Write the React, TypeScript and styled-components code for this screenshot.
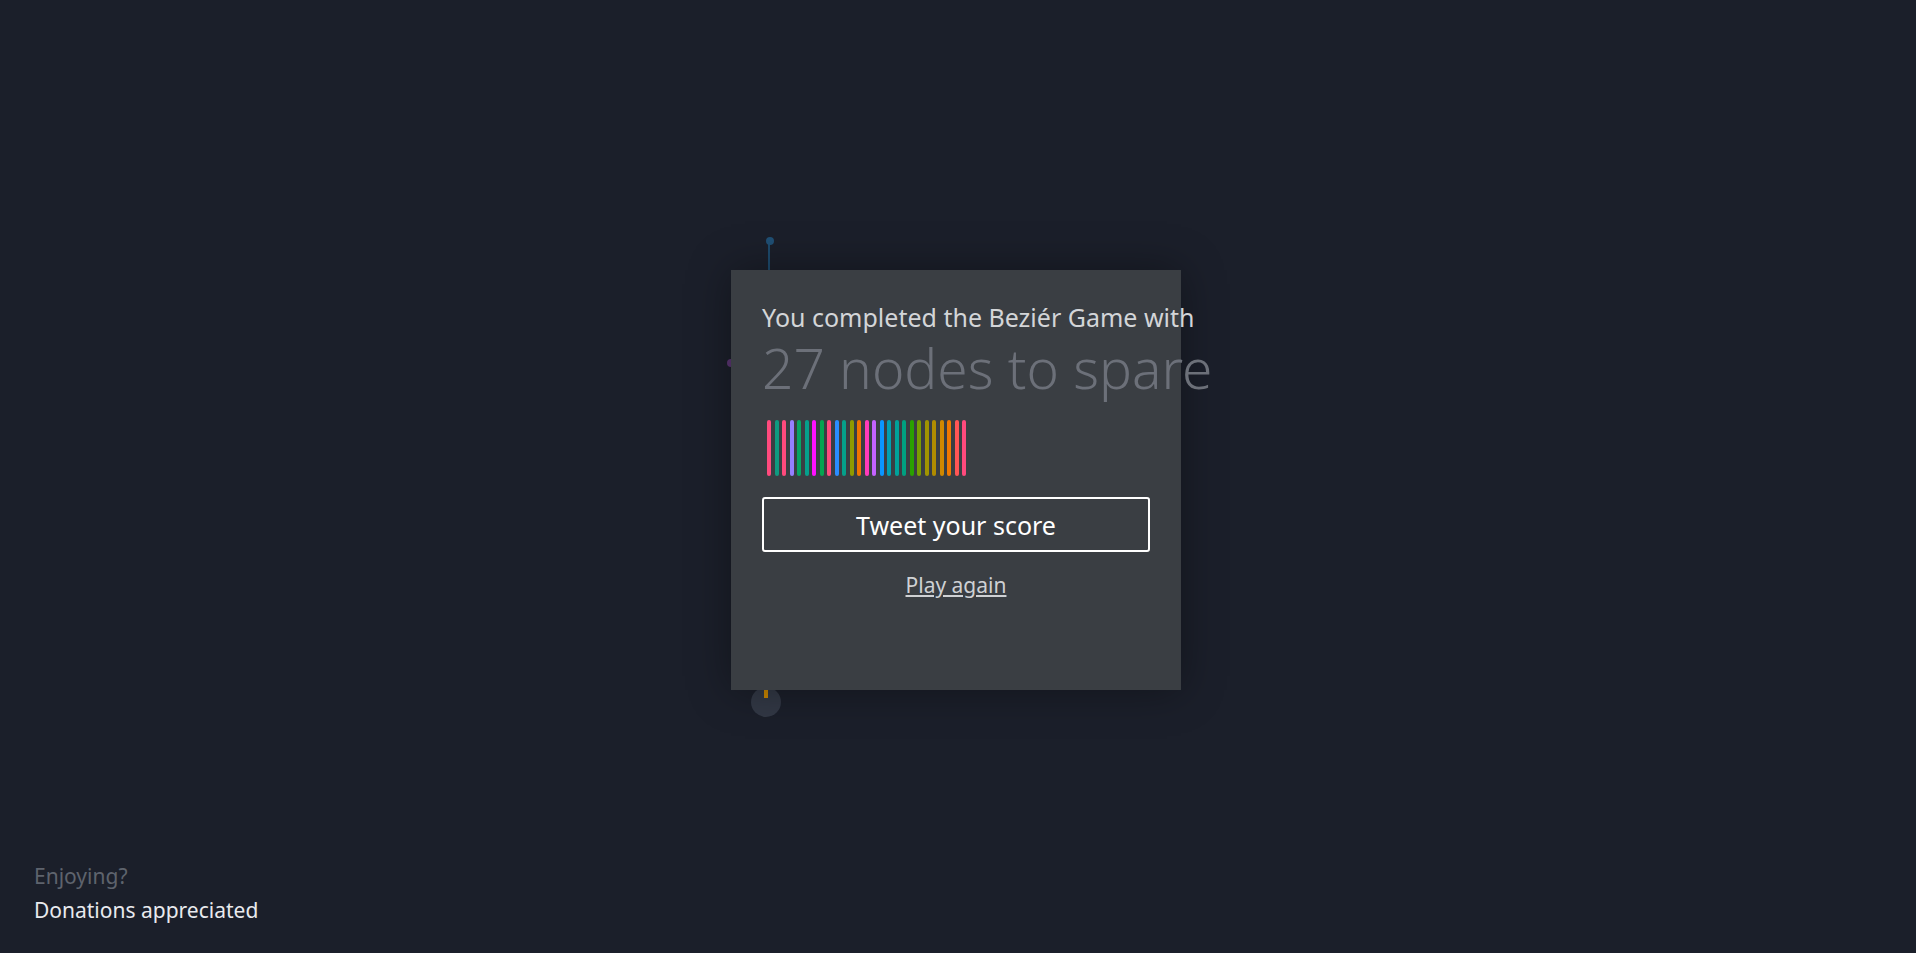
import styled, { createGlobalStyle } from "styled-components";

const GlobalStyle = createGlobalStyle`
  html, body {
    margin: 0;
    padding: 0;
    background: #1b1f2a;
    font-family: "Noto Sans", "Open Sans", sans-serif;
  }
`;

const bars = [
  "#ff4a7d", "#0f9a80", "#ff4a7d", "#9580ff", "#07a464", "#05a08c", "#ff10ff",
  "#05a450", "#ff4a7d", "#2a8cff", "#05a08a", "#8f9a00", "#f07300", "#ff3aba",
  "#c462ff", "#0a96ff", "#00a0b0", "#00a29a", "#00a080", "#2aa000", "#7a9c00",
  "#a09400", "#b08c00", "#d08800", "#f07800", "#ff5555", "#ff4a7d",
];

const Page = styled.div`
  position: relative;
  width: 100%;
  height: 100vh;
  overflow: hidden;
  background: #1b1f2a;
`;

const Canvas = styled.svg`
  position: absolute;
  inset: 0;
  width: 100%;
  height: 100%;
`;

const Stage = styled.div`
  position: relative;
  height: 100%;
  display: flex;
  align-items: center;
  justify-content: center;
`;

const Modal = styled.div`
  box-sizing: border-box;
  width: 450px;
  height: 420px;
  margin: 7px 4px 0 0;
  padding: 32px 31px 30px;
  background: #3a3e43;
  box-shadow: 0 0 40px rgba(0, 0, 0, 0.35);
  display: flex;
  flex-direction: column;
`;

const Lead = styled.div`
  font-size: 25px;
  line-height: 30px;
  color: #d3d5d8;
  white-space: nowrap;
`;

const Score = styled.div`
  margin-top: 2px;
  font-size: 55px;
  font-weight: 300;
  line-height: 68px;
  color: #6c7079;
  white-space: nowrap;
`;

const Bars = styled.div`
  display: flex;
  gap: 3.5px;
  margin: 18px 0 0 5px;
  height: 56px;
`;

const Bar = styled.span<{ $color: string }>`
  width: 4px;
  height: 100%;
  border-radius: 2px;
  background: ${(p) => p.$color};
`;

const TweetButton = styled.button`
  margin-top: 21px;
  height: 55px;
  width: 100%;
  background: transparent;
  border: 2px solid #ffffff;
  border-radius: 3px;
  color: #ffffff;
  font-family: inherit;
  font-size: 25px;
  cursor: pointer;
`;

const PlayAgain = styled.a`
  align-self: center;
  margin-top: 19px;
  font-size: 21px;
  color: #cfd1d4;
  text-decoration: underline;
  cursor: pointer;
`;

const Footer = styled.div`
  position: absolute;
  left: 34px;
  bottom: 26px;
  font-size: 21px;
  line-height: 34px;
`;

const FooterMuted = styled.div`
  color: #5e636d;
`;

const FooterLink = styled.div`
  color: #e9eaee;
`;

export default function App() {
  return (
    <Page>
      <GlobalStyle />
      <Canvas viewBox="0 0 1916 953" preserveAspectRatio="xMidYMid slice">
        <line x1="769" y1="244" x2="769" y2="290" stroke="#1d4a6c" strokeWidth="2" />
        <circle cx="770" cy="241" r="4" fill="#1f4f74" />
        <circle cx="731" cy="363" r="4" fill="#5a3572" />
        <circle cx="766" cy="702" r="15" fill="#323845" />
        <line x1="766" y1="688" x2="766" y2="698" stroke="#c98500" strokeWidth="4" />
      </Canvas>
      <Stage>
        <Modal>
          <Lead>You completed the Beziér Game with</Lead>
          <Score>27 nodes to spare</Score>
          <Bars>
            {bars.map((c, i) => (
              <Bar key={i} $color={c} />
            ))}
          </Bars>
          <TweetButton>Tweet your score</TweetButton>
          <PlayAgain>Play again</PlayAgain>
        </Modal>
      </Stage>
      <Footer>
        <FooterMuted>Enjoying?</FooterMuted>
        <FooterLink>Donations appreciated</FooterLink>
      </Footer>
    </Page>
  );
}
